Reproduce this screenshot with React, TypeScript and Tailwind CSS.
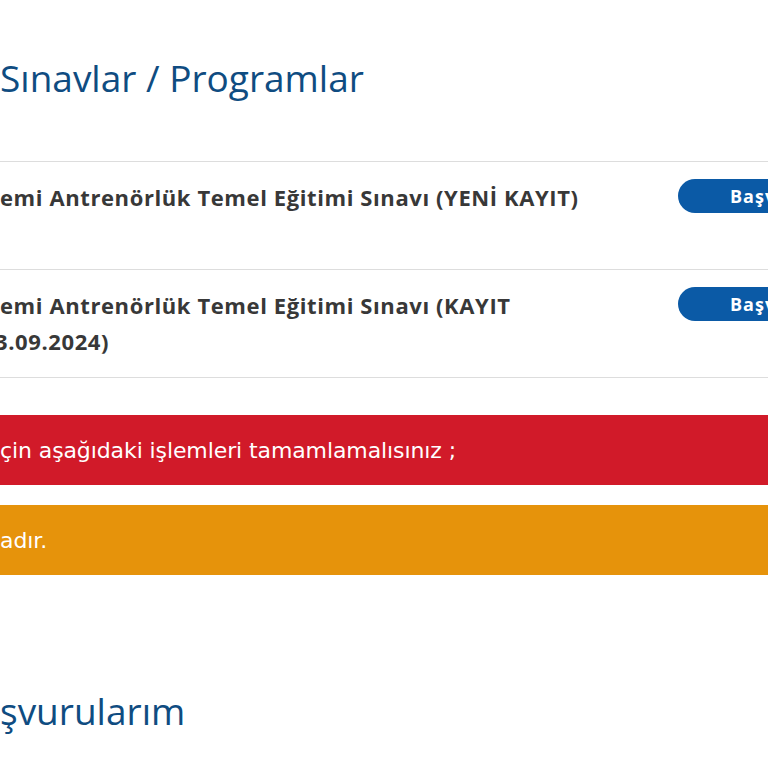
const rows = [
  { lines: ["emi Antrenörlük Temel Eğitimi Sınavı (YENİ KAYIT)"] },
  { lines: ["emi Antrenörlük Temel Eğitimi Sınavı (KAYIT", "3.09.2024)"] },
];

function ApplyButton() {
  return (
    <button className="h-[34px] w-[160px] rounded-full bg-[#0b5aa6] pl-[52px] text-left text-[18px] font-bold tracking-[1px] text-white">
      Başvur
    </button>
  );
}

export default function App() {
  const font = { fontFamily: '"Open Sans", "Noto Sans", sans-serif' };
  const alertFont = { fontFamily: '"DejaVu Sans", "Open Sans", sans-serif' };
  return (
    <div className="h-[768px] w-[768px] overflow-hidden bg-white" style={font}>
      <div className="w-[860px]">
        <h2 className="pt-[53px] text-[37px] leading-[50px] text-[#0f4c81]">Sınavlar / Programlar</h2>

        <div className="mt-[58px] border-t border-[#dddddd]">
          {rows.map((row, i) => (
            <div key={i} className="flex h-[108px] items-start justify-between border-b border-[#dddddd] pt-[17px]">
              <div className="text-[22px] font-bold leading-[36px] tracking-[0.6px] text-[#383838]">
                {row.lines.map((l, j) => (
                  <div key={j} className={j === 1 ? "-ml-[5px]" : ""}>{l}</div>
                ))}
              </div>
              <div className="mr-[22px]">
                <ApplyButton />
              </div>
            </div>
          ))}
        </div>

        <div className="mt-[37px] flex h-[70px] items-center bg-[#d11a29] text-[22px] tracking-[-0.1px] text-white" style={alertFont}>
          çin aşağıdaki işlemleri tamamlamalısınız ;
        </div>
        <div className="mt-[20px] flex h-[70px] items-center bg-[#e6930b] text-[22px] tracking-[-0.1px] text-white" style={alertFont}>
          adır.
        </div>

        <h2 className="mt-[111px] text-[37px] leading-[50px] text-[#0f4c81]">şvurularım</h2>
      </div>
    </div>
  );
}
